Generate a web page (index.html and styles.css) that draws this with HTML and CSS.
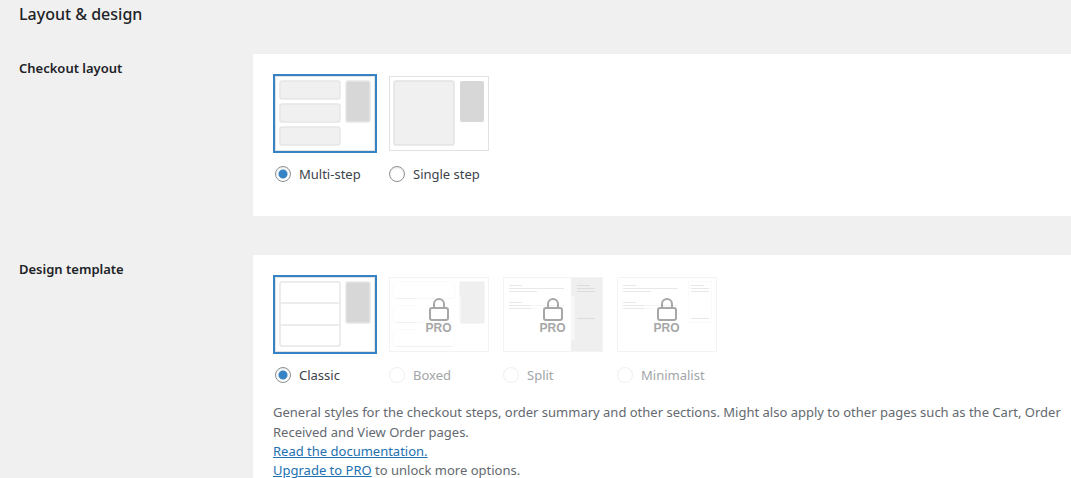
FILE: index.html
```html
<!DOCTYPE html>
<html lang="en">
<head>
<meta charset="utf-8">
<title>Layout &amp; design</title>
<link rel="stylesheet" href="styles.css">
</head>
<body>
<main class="settings">
  <h2 class="settings-title">Layout &amp; design</h2>

  <section class="row" role="radiogroup" aria-labelledby="layout-heading">
    <h3 class="row-title" id="layout-heading">Checkout layout</h3>
    <div class="panel">
      <div class="options">
        <label class="option">
          <span class="thumb selected">
            <svg viewBox="0 0 100 75" fill="#f0f0f0" stroke="#e6e6e6" stroke-width="1.5">
              <rect x="5" y="5" width="60" height="18" rx="2"/>
              <rect x="5" y="28" width="60" height="18" rx="2"/>
              <rect x="5" y="51" width="60" height="18" rx="2"/>
              <rect x="71" y="5" width="24" height="41" rx="2" fill="#d7d7d7"/>
            </svg>
          </span>
          <span class="choice"><input type="radio" name="layout" checked>Multi-step</span>
        </label>
        <label class="option">
          <span class="thumb">
            <svg viewBox="0 0 100 75">
              <rect x="5" y="5" width="60" height="64" rx="2" fill="#f0f0f0" stroke="#e2e2e2" stroke-width="1.5"/>
              <rect x="71" y="5" width="24" height="41" rx="2" fill="#d7d7d7"/>
            </svg>
          </span>
          <span class="choice"><input type="radio" name="layout">Single step</span>
        </label>
      </div>
    </div>
  </section>

  <section class="row" role="radiogroup" aria-labelledby="template-heading">
    <h3 class="row-title" id="template-heading">Design template</h3>
    <div class="panel">
      <div class="options">
        <label class="option">
          <span class="thumb selected">
            <svg viewBox="0 0 100 75" fill="#fff" stroke="#e6e6e6" stroke-width="1.5">
              <rect x="5" y="5" width="60" height="64" rx="2"/>
              <path d="M5 26h60M5 48h60"/>
              <rect x="71" y="5" width="24" height="41" rx="2" fill="#d7d7d7"/>
            </svg>
          </span>
          <span class="choice"><input type="radio" name="template" checked>Classic</span>
        </label>
        <label class="option locked">
          <span class="thumb">
            <svg viewBox="0 0 100 75">
              <g fill="none" stroke="#fafafa">
                <rect x="4.500" y="4.500" width="61" height="17" rx="2"/>
                <rect x="4.500" y="28.500" width="61" height="17" rx="2"/>
                <rect x="4.500" y="52.500" width="61" height="17" rx="2"/>
              </g>
              <path d="M6 21.500h58M6 45.500h58M6 69.500h58" stroke="#f1f1f1"/>
              <rect x="70.500" y="4.500" width="25" height="42" rx="2" fill="#efefef" stroke="#f5f5f5"/>
            </svg>
            <span class="pro">
              <svg class="lock" viewBox="0 0 20 24"><rect x="1" y="10" width="18" height="12" rx="2"/><path d="M5 10V6a5 5 0 0 1 10 0v4"/></svg>
              <span>PRO</span>
            </span>
          </span>
          <span class="choice"><input type="radio" name="template" disabled>Boxed</span>
        </label>
        <label class="option locked">
          <span class="thumb">
            <svg viewBox="0 0 100 75">
              <rect x="68" width="32" height="75" fill="#efefef"/>
              <path d="M6 8.500h13M6 11.500h55M6 14.500h28M6 25.500h13M6 28.500h55M6 31.500h28" stroke="#e8e8e8"/>
              <path d="M74 8.500h13M74 11.500h18M74 14.500h18M74 41.500h18" stroke="#dcdcdc"/>
            </svg>
            <span class="pro">
              <svg class="lock" viewBox="0 0 20 24"><rect x="1" y="10" width="18" height="12" rx="2"/><path d="M5 10V6a5 5 0 0 1 10 0v4"/></svg>
              <span>PRO</span>
            </span>
          </span>
          <span class="choice"><input type="radio" name="template" disabled>Split</span>
        </label>
        <label class="option locked">
          <span class="thumb">
            <svg viewBox="0 0 100 75">
              <rect x="71.500" y="4.500" width="23" height="41" fill="none" stroke="#fafafa"/>
              <path d="M6 8.500h13M6 11.500h55M6 14.500h28M6 25.500h13M6 28.500h55M6 31.500h28" stroke="#e8e8e8"/>
              <path d="M74 8.500h13M74 11.500h18M74 14.500h18M74 41.500h18" stroke="#e8e8e8"/>
            </svg>
            <span class="pro">
              <svg class="lock" viewBox="0 0 20 24"><rect x="1" y="10" width="18" height="12" rx="2"/><path d="M5 10V6a5 5 0 0 1 10 0v4"/></svg>
              <span>PRO</span>
            </span>
          </span>
          <span class="choice"><input type="radio" name="template" disabled>Minimalist</span>
        </label>
      </div>
      <p class="description">General styles for the checkout steps, order summary and other sections. Might also apply to other pages such as the Cart, Order Received and View Order pages.</p>
      <p class="links"><a href="#docs">Read the documentation.</a><br><a href="#upgrade">Upgrade to PRO</a> to unlock more options.</p>
    </div>
  </section>
</main>
</body>
</html>
```
FILE: styles.css
```css
* { box-sizing: border-box; }

html { background: #f0f0f0; overflow: hidden; }

body {
  margin: 0;
  color: #1d2327;
  font: 13px/20px "Noto Sans", "Open Sans", sans-serif;
}

.settings-title {
  margin: 0;
  padding: 2px 19px 28px;
  font-size: 16px;
  line-height: 24px;
  font-weight: 500;
}

.row {
  display: grid;
  grid-template-columns: 253px 1fr;
}

.row + .row { margin-top: 39px; }

.row-title {
  margin: 0;
  padding: 4px 19px;
  font-size: 13px;
  line-height: 20px;
  font-weight: 600;
}

.panel {
  min-height: 162px;
  padding: 22px 0 0 20px;
  background: #fff;
}

.options {
  display: flex;
  flex-wrap: wrap;
  gap: 14px;
  padding-left: 2px;
}

.option { min-width: 100px; color: #3c434a; }

.thumb {
  display: block;
  position: relative;
  width: 100px;
  height: 75px;
  background: #fff;
}

.thumb::after {
  content: "";
  position: absolute;
  inset: 0;
  border: 1px solid #e2e2e2;
}

.thumb > svg { display: block; width: 100%; height: 100%; }

.selected { box-shadow: 0 0 0 2px #3582c4; }

.locked .thumb::after { border-color: #f3f3f3; }

.choice {
  display: flex;
  align-items: center;
  gap: 8px;
  height: 20px;
  margin-top: 13px;
}

.choice input {
  appearance: none;
  flex: none;
  width: 16px;
  height: 16px;
  margin: 0;
  border: 1px solid #8c8f94;
  border-radius: 50%;
  background: #fff;
  box-shadow: inset 0 1px 2px rgba(0, 0, 0, .1);
}

.choice input:checked {
  background: radial-gradient(circle, #3582c4 0 4px, #fff 5px);
}

.locked { color: #a2a5a8; }

.choice input:disabled { border-color: #f0f0f0; box-shadow: none; }

.pro {
  position: absolute;
  inset: 19px 28px 12px 27px;
  display: flex;
  flex-direction: column;
  align-items: center;
  padding-top: 2px;
  background: rgba(255, 255, 255, .5);
  color: #a7a7a7;
  font: bold 12px/12px "Liberation Sans", Arial, sans-serif;
}

.lock {
  width: 20px;
  height: 24px;
  fill: none;
  stroke: currentColor;
  stroke-width: 2;
}

.description,
.links {
  margin: 17px 0 0;
  color: #646970;
}

.links {
  margin-top: 0;
  line-height: 19px;
}

.links a { color: #2271b1; }
```
